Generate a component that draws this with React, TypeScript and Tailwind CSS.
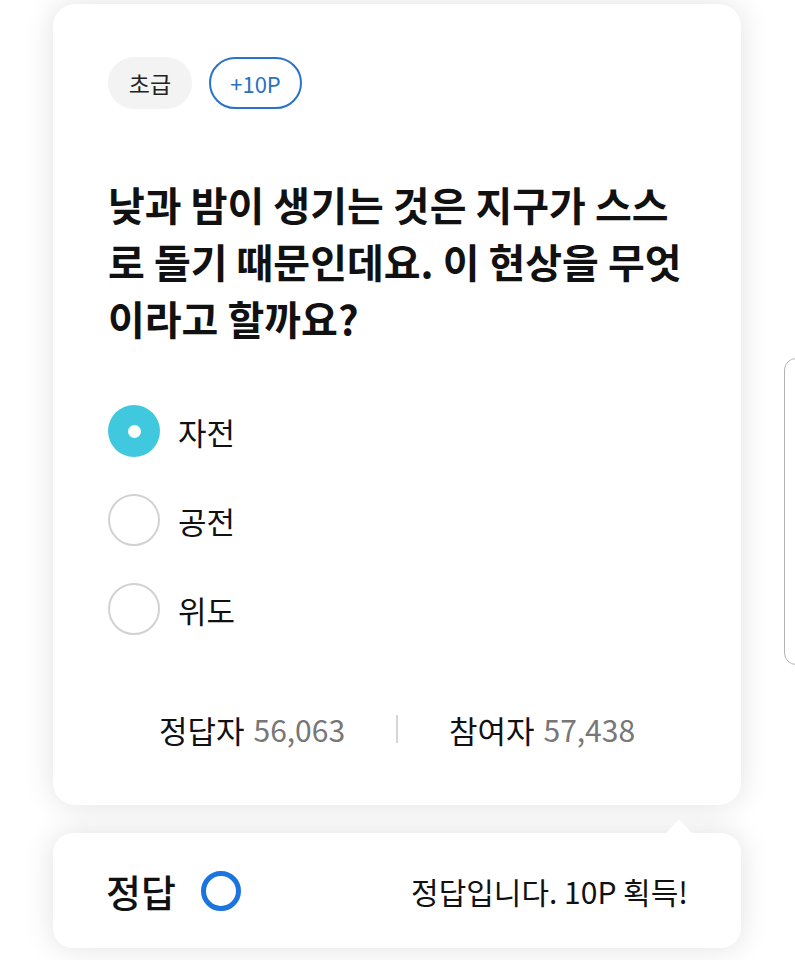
import React from "react";

const font = { fontFamily: '"Noto Sans CJK KR", "Noto Sans", sans-serif' };

function Option({ label, selected }: { label: string; selected?: boolean }) {
  return (
    <div className="flex items-center h-[52px]">
      {selected ? (
        <div className="w-[52px] h-[52px] rounded-full bg-[#40c9de] flex items-center justify-center">
          <div className="w-[13px] h-[13px] rounded-full bg-white" />
        </div>
      ) : (
        <div className="w-[52px] h-[52px] rounded-full border-2 border-[#d2d2d2] bg-white" />
      )}
      <span className="ml-[18px] text-[31px] leading-none text-[#111]">{label}</span>
    </div>
  );
}

export default function App() {
  return (
    <div className="relative w-[795px] h-[960px] overflow-hidden bg-white" style={font}>
      {/* partial next card at right edge */}
      <div className="absolute left-[784px] top-[358px] w-[40px] h-[307px] rounded-[12px] border border-[#b4b4b4] bg-white" />

      <div className="pt-[4px] pl-[53px]">
        {/* Question card */}
        <div className="w-[688px] h-[801px] rounded-[22px] bg-white shadow-[0_0_30px_rgba(0,0,0,0.12)] px-[55px] pt-[53px] flex flex-col">
          <div className="flex gap-[17px]">
            <div className="h-[52px] w-[84px] rounded-full bg-[#f3f3f3] flex items-center justify-center text-[23px] text-[#222]">
              초급
            </div>
            <div className="h-[52px] w-[93px] rounded-full border-2 border-[#2a72c8] flex items-center justify-center text-[22px] text-[#2a6fc2]">
              +10P
            </div>
          </div>

          <div className="mt-[67px] text-[40px] font-bold leading-[57px] text-[#111] whitespace-nowrap">
            낮과 밤이 생기는 것은 지구가 스스
            <br />
            로 돌기 때문인데요. 이 현상을 무엇
            <br />
            이라고 할까요?
          </div>

          <div className="mt-[58px] flex flex-col gap-[37px]">
            <Option label="자전" selected />
            <Option label="공전" />
            <Option label="위도" />
          </div>

          <div className="mt-[78px] flex items-center h-[32px]">
            <div className="flex-1 flex justify-center items-center leading-none">
              <span className="text-[31px] text-[#111]">정답자</span>
              <span className="ml-[9px] text-[30px] text-[#777]">56,063</span>
            </div>
            <div className="w-[2px] h-[28px] bg-[#d6d6d6]" />
            <div className="flex-1 flex justify-center items-center leading-none">
              <span className="text-[31px] text-[#111]">참여자</span>
              <span className="ml-[9px] text-[30px] text-[#777]">57,438</span>
            </div>
          </div>
        </div>

        {/* Answer card */}
        <div className="relative mt-[28px] w-[688px] h-[115px] rounded-[20px] bg-white shadow-[0_0_30px_rgba(0,0,0,0.12)] px-[53px] flex items-center justify-between">
          <div className="absolute -top-[14px] left-[613px] w-0 h-0 border-l-[13px] border-r-[13px] border-b-[14px] border-l-transparent border-r-transparent border-b-white" />
          <div className="flex items-center">
            <span className="text-[38px] font-medium text-[#111] leading-none">정답</span>
            <div className="ml-[25px] w-[40px] h-[40px] rounded-full border-[5px] border-[#1c74e0]" />
          </div>
          <span className="text-[30px] text-[#111] leading-none">정답입니다. 10P 획득!</span>
        </div>
      </div>
    </div>
  );
}
